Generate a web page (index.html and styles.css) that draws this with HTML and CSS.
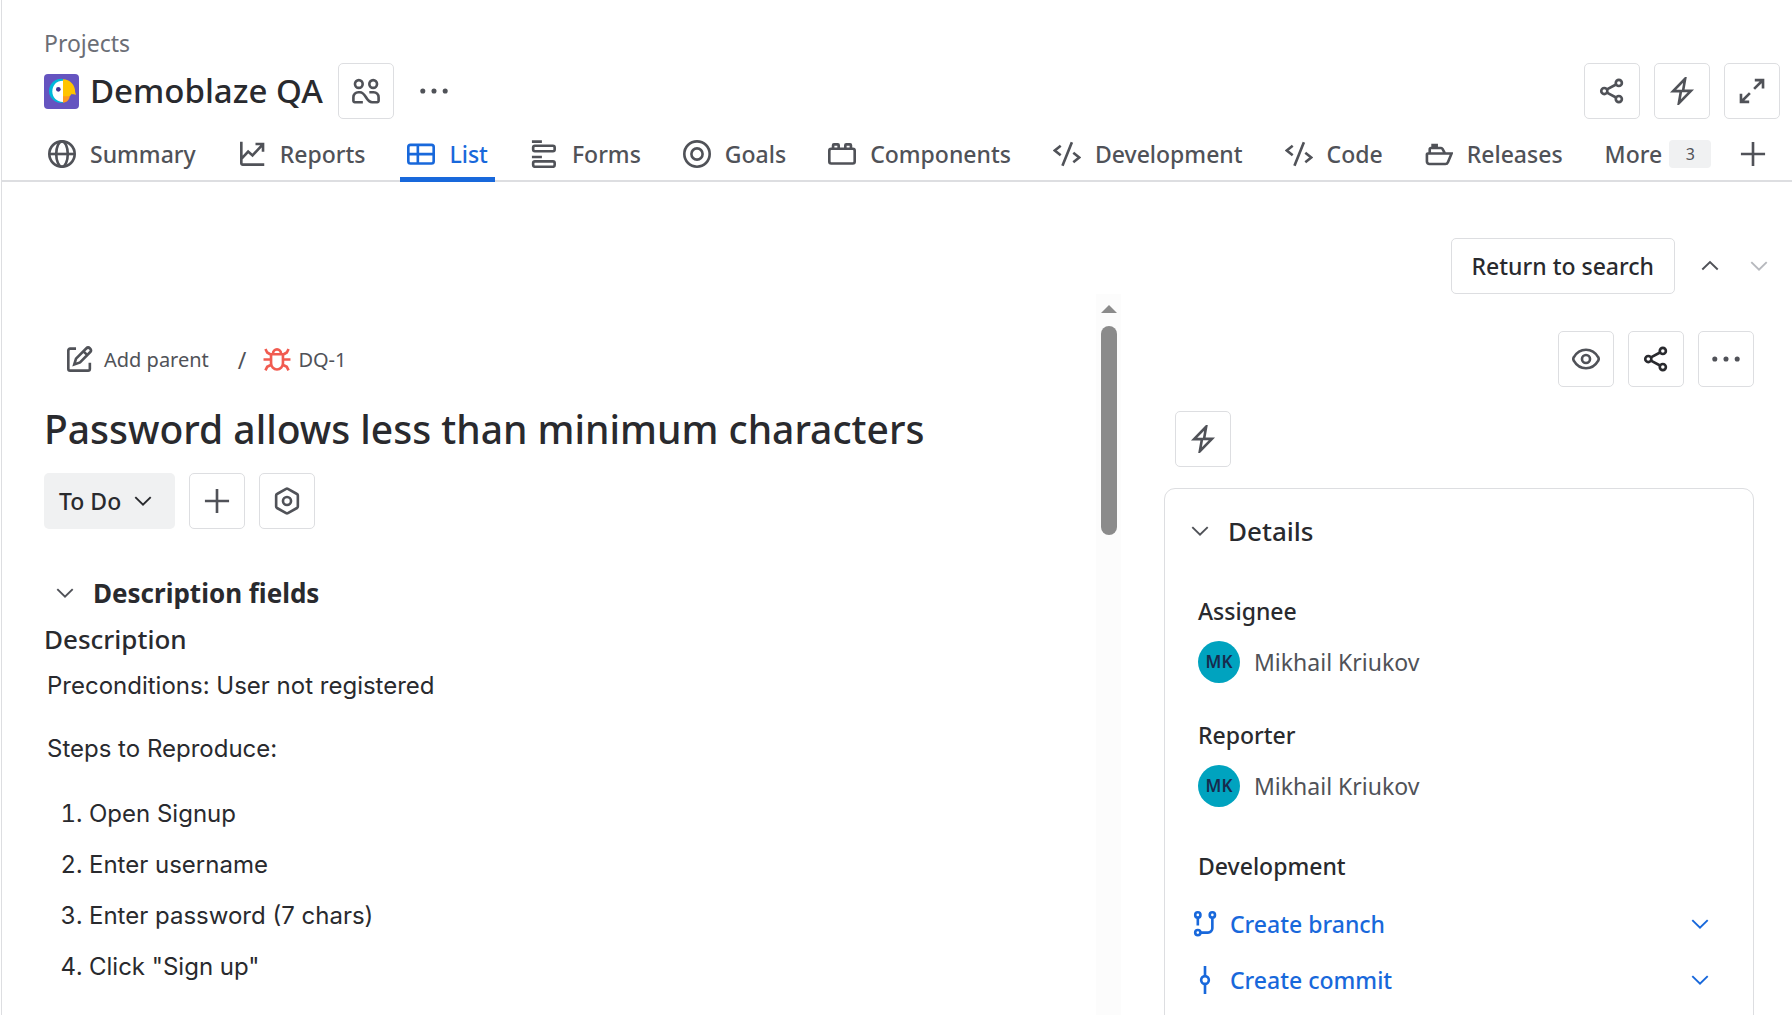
FILE: index.html
```html
<!DOCTYPE html>
<html lang="en">
<head>
<meta charset="utf-8">
<title>DQ-1 Password allows less than minimum characters</title>
<link rel="stylesheet" href="styles.css">
</head>
<body>
<svg class="sprite" aria-hidden="true">
  <symbol id="i-globe" viewBox="0 0 16 16"><circle cx="8" cy="8" r="7.25"/><ellipse cx="8" cy="8" rx="3.3" ry="7.25"/><path d="M.75 8h14.5"/></symbol>
  <symbol id="i-reports" viewBox="0 0 16 16"><path d="M1.9 1v12.3a.8.8 0 0 0 .8.8H15M2.2 10.5l3.6-3.9 2.5 2.2 5.6-6M10 2.3h4.3v4.4"/></symbol>
  <symbol id="i-list" viewBox="0 0 16 16"><rect x=".75" y="2.75" width="14.5" height="10.7" rx="1.25"/><path d="M6.2 2.75v10.7M.75 8.1h14.5"/></symbol>
  <symbol id="i-forms" viewBox="0 0 16 16"><path d="M1.1.9h5.7M1.1 9.7h5.7"/><rect x="1.8" y="3.3" width="12.3" height="3.1" rx="1"/><rect x="1.8" y="12.2" width="12.3" height="3.1" rx="1"/></symbol>
  <symbol id="i-goals" viewBox="0 0 16 16"><circle cx="8" cy="8" r="7.25"/><circle cx="8" cy="8" r="3.2"/></symbol>
  <symbol id="i-components" viewBox="0 0 16 16"><rect x=".75" y="5" width="14.5" height="8.4" rx="1.1"/><path d="M2.9 5V3a.5.5 0 0 1 .5-.5h2.2a.5.5 0 0 1 .5.5v2M9.9 5V3a.5.5 0 0 1 .5-.5h2.2a.5.5 0 0 1 .5.5v2"/></symbol>
  <symbol id="i-code" viewBox="0 0 16 16"><path d="M4.4 3.3 1 6l3.4 2.7M10.8 1.3 5.4 14.7M11.6 7.3 15 10l-3.4 2.7"/></symbol>
  <symbol id="i-ship" viewBox="0 0 16 16"><path d="M1.6 7.7h13.6l-2.1 5a1.6 1.6 0 0 1-1.5 1H2.5a1.4 1.4 0 0 1-1.4-1.4V8.2a.5.5 0 0 1 .5-.5zM2.7 7.5V5.3a.7.7 0 0 1 .7-.7h5.8a1 1 0 0 1 .8.5l1.3 2.4"/><path class="solid" d="M4.1 2.6h2.8v2H4.1z"/></symbol>
  <symbol id="i-team" viewBox="0 0 16 16"><circle cx="3.9" cy="4" r="2.2"/><circle cx="12.1" cy="4" r="2.2"/><path d="M6.2 14.4H1.6a.8.8 0 0 1-.8-.8v-2.1a2.8 2.8 0 0 1 2.8-2.8h.9c3.6 0 3.4 5.7 7 5.7h2.9a.8.8 0 0 0 .8-.8v-2.1a2.8 2.8 0 0 0-2.8-2.8H9.9"/></symbol>
  <symbol id="i-dots" viewBox="0 0 16 16"><g class="solid"><circle cx="1.6" cy="8" r=".95"/><circle cx="8" cy="8" r=".95"/><circle cx="14.4" cy="8" r=".95"/></g></symbol>
  <symbol id="i-share" viewBox="0 0 16 16"><circle cx="3.6" cy="8" r="1.75"/><circle cx="11.9" cy="3.4" r="1.75"/><circle cx="11.9" cy="12.6" r="1.75"/><path d="m5.1 7.1 5.2-2.8M5.1 8.9l5.2 2.8"/></symbol>
  <symbol id="i-bolt" viewBox="0 0 16 16"><path d="M9.8 1 2.9 8.1h4.5L6.2 15l6.9-7.1H8.6z"/></symbol>
  <symbol id="i-expand" viewBox="0 0 16 16"><path d="M9.6 1.8h4.7v4.7M14 2 9.2 6.8M6.4 14.2H1.7V9.5M2 14l4.8-4.8"/></symbol>
  <symbol id="i-plus" viewBox="0 0 16 16"><path d="M8 1.1v13.8M1.1 8h13.8"/></symbol>
  <symbol id="i-down" viewBox="0 0 16 16"><path d="m3.6 5.8 4.4 4.3 4.4-4.3"/></symbol>
  <symbol id="i-up" viewBox="0 0 16 16"><path d="M3.6 10 8 5.7l4.4 4.3"/></symbol>
  <symbol id="i-edit" viewBox="0 0 16 16"><path d="M6.3 1.500H2.900a1 1 0 0 0-1 1v10.600a1 1 0 0 0 1 1h10.300a1 1 0 0 0 1-1V9.600M5.300 10.500l1-3.300 5.800-5.800a1.500 1.500 0 0 1 2.200 2.200L8.600 9.400zM10.600 3.100l2 2"/></symbol>
  <symbol id="i-bug" viewBox="0 0 16 16"><path d="M4.600 4.700h6.800v5.100a3.400 3.600 0 0 1-6.800 0zM5.700 4.500a2.300 2.600 0 0 1 4.600 0M1.400 1.700l1 2 2.200 1.300M14.600 1.700l-1 2-2.200 1.300M.3 7.700h4.300M11.400 7.700h4.300M1.400 13.900l1-2 2.400-1.200M14.600 13.900l-1-2-2.400-1.200"/></symbol>
  <symbol id="i-hex" viewBox="0 0 16 16"><path d="M8.500 1.100 13.700 4a.9.9 0 0 1 .5.8v6.400a.9.9 0 0 1-.5.8l-5.200 2.900a1 1 0 0 1-1 0L2.300 12a.9.9 0 0 1-.5-.8V4.800a.9.9 0 0 1 .5-.8l5.200-2.900a1 1 0 0 1 1 0z"/><circle cx="8" cy="8" r="2.300"/></symbol>
  <symbol id="i-eye" viewBox="0 0 16 16"><path d="M8 2.700c3.100 0 5.400 1.600 6.900 4.200a2 2 0 0 1 0 2.200c-1.500 2.600-3.800 4.200-6.900 4.200s-5.400-1.600-6.900-4.200a2 2 0 0 1 0-2.200C2.600 4.300 4.900 2.700 8 2.700z"/><circle cx="8" cy="8" r="2.300"/></symbol>
  <symbol id="i-branch" viewBox="0 0 16 16"><circle cx="3.900" cy="2.800" r="1.500"/><circle cx="12.200" cy="2.800" r="1.500"/><circle cx="3.900" cy="12.900" r="1.500"/><path d="M3.900 4.500v4.400M12.200 4.500v5.900a2.500 2.500 0 0 1-2.500 2.500H5.500"/></symbol>
  <symbol id="i-commit" viewBox="0 0 16 16"><circle cx="8" cy="8" r="2.200"/><path d="M8 0v5.800M8 10.200V16"/></symbol>
</svg>

<div class="shell">
  <aside class="rail" aria-label="Sidebar"></aside>
  <main class="main">
    <header class="header">
      <a class="crumb" href="#">Projects</a>
      <div class="title-row">
        <svg class="logo" viewBox="0 0 105 105" aria-hidden="true">
          <rect width="105" height="105" rx="12" fill="#6554c0"/>
          <path d="M57 15a36 36 0 0 0-42 36 36 36 0 0 0 42 35z" fill="#00b8d9"/>
          <path d="M57 20c-20 0-32 14-32 32s12 32 32 32z" fill="#fff"/>
          <path d="M57 66h20c0 10-8 20-20 20z" fill="#ff991f"/>
          <path d="M57 16c21 1 34 16 36 32 0 5 1 8 3 14-6-1-10-1-13-3-2 4-4 6-7 8H57z" fill="#ffc400"/>
          <circle cx="43" cy="46" r="7" fill="#403294"/>
        </svg>
        <h1 class="project">Demoblaze QA</h1>
        <button class="icon-btn" aria-label="Team"><svg class="icon"><use href="#i-team"/></svg></button>
        <button class="bare-btn more-btn" aria-label="More actions"><svg class="icon"><use href="#i-dots"/></svg></button>
        <div class="actions push">
          <button class="icon-btn" aria-label="Share"><svg class="icon"><use href="#i-share"/></svg></button>
          <button class="icon-btn" aria-label="Automation"><svg class="icon"><use href="#i-bolt"/></svg></button>
          <button class="icon-btn" aria-label="Full screen"><svg class="icon"><use href="#i-expand"/></svg></button>
        </div>
      </div>
    </header>
    <nav class="tabs" aria-label="Project views">
      <a class="tab" href="#"><svg class="icon"><use href="#i-globe"/></svg>Summary</a>
      <a class="tab" href="#"><svg class="icon"><use href="#i-reports"/></svg>Reports</a>
      <a class="tab current" href="#" aria-current="page"><svg class="icon"><use href="#i-list"/></svg>List</a>
      <a class="tab" href="#"><svg class="icon"><use href="#i-forms"/></svg>Forms</a>
      <a class="tab" href="#"><svg class="icon"><use href="#i-goals"/></svg>Goals</a>
      <a class="tab" href="#"><svg class="icon"><use href="#i-components"/></svg>Components</a>
      <a class="tab" href="#"><svg class="icon"><use href="#i-code"/></svg>Development</a>
      <a class="tab" href="#"><svg class="icon"><use href="#i-code"/></svg>Code</a>
      <a class="tab" href="#"><svg class="icon"><use href="#i-ship"/></svg>Releases</a>
      <button class="tab more">More<span class="badge">3</span></button>
      <button class="bare-btn add-tab" aria-label="Add view"><svg class="icon"><use href="#i-plus"/></svg></button>
    </nav>

    <div class="pager">
      <button class="btn">Return to search</button>
      <button class="bare-btn" aria-label="Previous"><svg class="icon thin"><use href="#i-up"/></svg></button>
      <button class="bare-btn" aria-label="Next" disabled><svg class="icon thin"><use href="#i-down"/></svg></button>
    </div>

    <div class="columns">
      <section class="issue">
        <div class="path">
          <button class="bare-btn parent"><svg class="icon"><use href="#i-edit"/></svg>Add parent</button>
          <span class="slash">/</span>
          <a class="key" href="#"><svg class="icon bug"><use href="#i-bug"/></svg>DQ-1</a>
        </div>
        <h2 class="summary">Password allows less than minimum characters</h2>
        <div class="actions status-row">
          <button class="status">To Do<svg class="icon thin"><use href="#i-down"/></svg></button>
          <button class="icon-btn" aria-label="Add"><svg class="icon"><use href="#i-plus"/></svg></button>
          <button class="icon-btn" aria-label="Apps"><svg class="icon"><use href="#i-hex"/></svg></button>
        </div>
        <h3 class="group"><button class="bare-btn" aria-label="Collapse description fields"><svg class="icon thin"><use href="#i-down"/></svg></button>Description fields</h3>
        <h4 class="field-title">Description</h4>
        <div class="prose">
          <p>Preconditions: User not registered</p>
          <p>Steps to Reproduce:</p>
          <ol>
            <li>Open Signup</li>
            <li>Enter username</li>
            <li>Enter password (7 chars)</li>
            <li>Click "Sign up"</li>
          </ol>
        </div>
      </section>
      <div class="track" aria-hidden="true"><span class="arrow"></span><span class="thumb"></span></div>
      <aside class="side">
        <div class="actions side-actions">
          <button class="icon-btn" aria-label="Watch"><svg class="icon"><use href="#i-eye"/></svg></button>
          <button class="icon-btn dark" aria-label="Share"><svg class="icon"><use href="#i-share"/></svg></button>
          <button class="icon-btn" aria-label="Actions"><svg class="icon"><use href="#i-dots"/></svg></button>
        </div>
        <button class="icon-btn automation" aria-label="Automation"><svg class="icon"><use href="#i-bolt"/></svg></button>
        <section class="card">
          <h3 class="card-title"><button class="bare-btn" aria-label="Collapse details"><svg class="icon thin"><use href="#i-down"/></svg></button>Details</h3>
          <dl class="fields">
            <dt>Assignee</dt>
            <dd><span class="avatar">MK</span>Mikhail Kriukov</dd>
            <dt>Reporter</dt>
            <dd><span class="avatar">MK</span>Mikhail Kriukov</dd>
          </dl>
          <h4 class="dev-title">Development</h4>
          <div class="dev-row">
            <a href="#"><svg class="icon"><use href="#i-branch"/></svg>Create branch</a>
            <button class="bare-btn" aria-label="Branch options"><svg class="icon thin"><use href="#i-down"/></svg></button>
          </div>
          <div class="dev-row">
            <a href="#"><svg class="icon"><use href="#i-commit"/></svg>Create commit</a>
            <button class="bare-btn" aria-label="Commit options"><svg class="icon thin"><use href="#i-down"/></svg></button>
          </div>
        </section>
      </aside>
    </div>
  </main>
</div>
</body>
</html>
```
FILE: styles.css
```css
:root {
  --text: #292a2e;
  --subtle: #505258;
  --line: #dddee1;
  --blue: #1868db;
}

* { box-sizing: border-box; }

body {
  margin: 0;
  background: #fff;
  color: var(--text);
  font: 400 23px/28px "Noto Sans", "Open Sans", sans-serif;
}

h1, h2, h3, h4, p, ol, dl, dd { margin: 0; padding: 0; }
a { color: inherit; text-decoration: none; }

button {
  margin: 0;
  padding: 0;
  border: 0;
  background: none;
  color: inherit;
  font: inherit;
  cursor: pointer;
}

.sprite { position: absolute; width: 0; height: 0; }

.icon {
  flex: none;
  width: 28px;
  height: 28px;
  fill: none;
  stroke: currentColor;
  stroke-width: 1.5;
}
.thin { stroke-width: 1.1; }
.solid { fill: currentColor; stroke-width: 1; }

.shell {
  display: flex;
  height: 100vh;
  overflow: hidden;
}
.rail { flex: none; width: 2px; border-right: 1px solid var(--line); }
.main { flex: 1; min-width: 0; display: flex; flex-direction: column; }

/* Buttons */
.icon-btn, .btn {
  display: flex;
  align-items: center;
  justify-content: center;
  height: 56px;
  border: 1px solid var(--line);
  border-radius: 5px;
  background: #fff;
}
.icon-btn { flex: none; width: 56px; color: var(--subtle); }
.icon-btn.dark { color: var(--text); }
.btn { padding: 0 20px; font-weight: 500; }
.bare-btn { display: flex; align-items: center; color: var(--subtle); }
.bare-btn:disabled { color: #b7b9be; }
.actions { display: flex; gap: 14px; }
.push { margin-left: auto; }

/* Project header */
.header { padding: 29px 12px 0 42px; }
.crumb { display: block; color: #6b6e76; }
.title-row { display: flex; align-items: center; margin-top: 6px; }
.logo { width: 35px; height: 35px; margin-right: 11px; }
.project { margin-right: 15px; font-size: 33px; line-height: 42px; font-weight: 500; }
.more-btn { margin-left: 26px; }

.tabs {
  display: flex;
  flex: none;
  gap: 28px;
  height: 56px;
  margin-top: 7px;
  padding: 0 25px 0 39px;
  box-shadow: inset 0 -2px var(--line);
}
.tab {
  display: flex;
  align-items: center;
  gap: 14px;
  padding: 0 7px;
  color: var(--subtle);
  font-weight: 500;
}
.tab.current { color: var(--blue); box-shadow: inset 0 -5px var(--blue); }
.tab.more { gap: 7px; padding-right: 0; }
.badge {
  width: 42px;
  border-radius: 4px;
  background: #f0f1f2;
  font-size: 16px;
  font-weight: 400;
  text-align: center;
}
.add-tab { margin-left: auto; }

.pager {
  display: flex;
  justify-content: flex-end;
  gap: 21px;
  margin-top: 56px;
  padding-right: 19px;
}

/* Issue view */
.columns { display: flex; flex: 1; min-height: 0; }
.issue { flex: 1; min-width: 0; padding: 52px 42px 0 42px; overflow: hidden; }

.path {
  display: flex;
  align-items: center;
  padding-left: 21px;
  color: var(--subtle);
  font-size: 20px;
}
.parent { gap: 11px; }
.slash { margin: 0 17px 0 29px; font-size: 23px; }
.key { display: flex; align-items: center; gap: 7px; }
.bug { color: #f15b50; }

.summary { margin-top: 31px; font-size: 39px; line-height: 48px; font-weight: 500; }

.status-row { margin-top: 20px; }
.status {
  display: flex;
  align-items: center;
  gap: 8px;
  padding: 0 18px 0 15px;
  border-radius: 5px;
  background: #f0f1f2;
  font-weight: 500;
}

.group {
  display: flex;
  align-items: center;
  gap: 14px;
  margin-top: 46px;
  padding-left: 7px;
  font-size: 26px;
  line-height: 36px;
  font-weight: 700;
}
.field-title { margin-top: 14px; font-size: 26px; font-weight: 500; }

.prose {
  display: flex;
  flex-direction: column;
  gap: 21px;
  margin-top: 12px;
  padding-left: 3px;
  font-family: Inter, "Noto Sans", sans-serif;
  font-size: 24px;
  line-height: 42px;
}
.prose ol { display: flex; flex-direction: column; gap: 9px; margin-top: 2px; padding-left: 42px; }

/* Scroll bar beside the issue body */
.track {
  display: flex;
  flex: none;
  flex-direction: column;
  align-items: center;
  width: 25px;
  padding-top: 11px;
  background: #fcfcfc;
}
.arrow {
  border: 8px solid transparent;
  border-top: 0;
  border-bottom-color: #8b8b8b;
}
.thumb { width: 16px; height: 209px; margin-top: 13px; border-radius: 8px; background: #8b8b8b; }

/* Details sidebar */
.side {
  display: flex;
  flex: none;
  flex-direction: column;
  width: 671px;
  padding: 37px 38px 0 43px;
}
.side-actions { justify-content: flex-end; }
.automation { margin: 24px 0 0 11px; }
.card {
  flex: none;
  margin-top: 21px;
  padding: 24px 39px 84px 33px;
  border: 1px solid var(--line);
  border-radius: 11px;
}
.card-title {
  display: flex;
  align-items: center;
  gap: 14px;
  margin-left: -12px;
  font-size: 26px;
  line-height: 36px;
  font-weight: 500;
}
.fields { margin-top: 48px; }
.fields dt { font-weight: 500; }
.fields dd {
  display: flex;
  align-items: center;
  gap: 14px;
  margin: 16px 0 38px;
  color: var(--subtle);
}
.avatar {
  width: 42px;
  border-radius: 50%;
  background: #00a3bf;
  color: #172b4d;
  font-size: 17px;
  line-height: 42px;
  font-weight: 600;
  text-align: center;
}
.dev-title { margin-top: 45px; padding-bottom: 2px; font-size: 23px; font-weight: 500; }
.dev-row {
  display: flex;
  justify-content: space-between;
  margin: 28px 0 0 -7px;
  color: var(--blue);
  font-weight: 500;
}
.dev-row a { display: flex; align-items: center; gap: 11px; }
.dev-row .bare-btn { color: inherit; }
```
